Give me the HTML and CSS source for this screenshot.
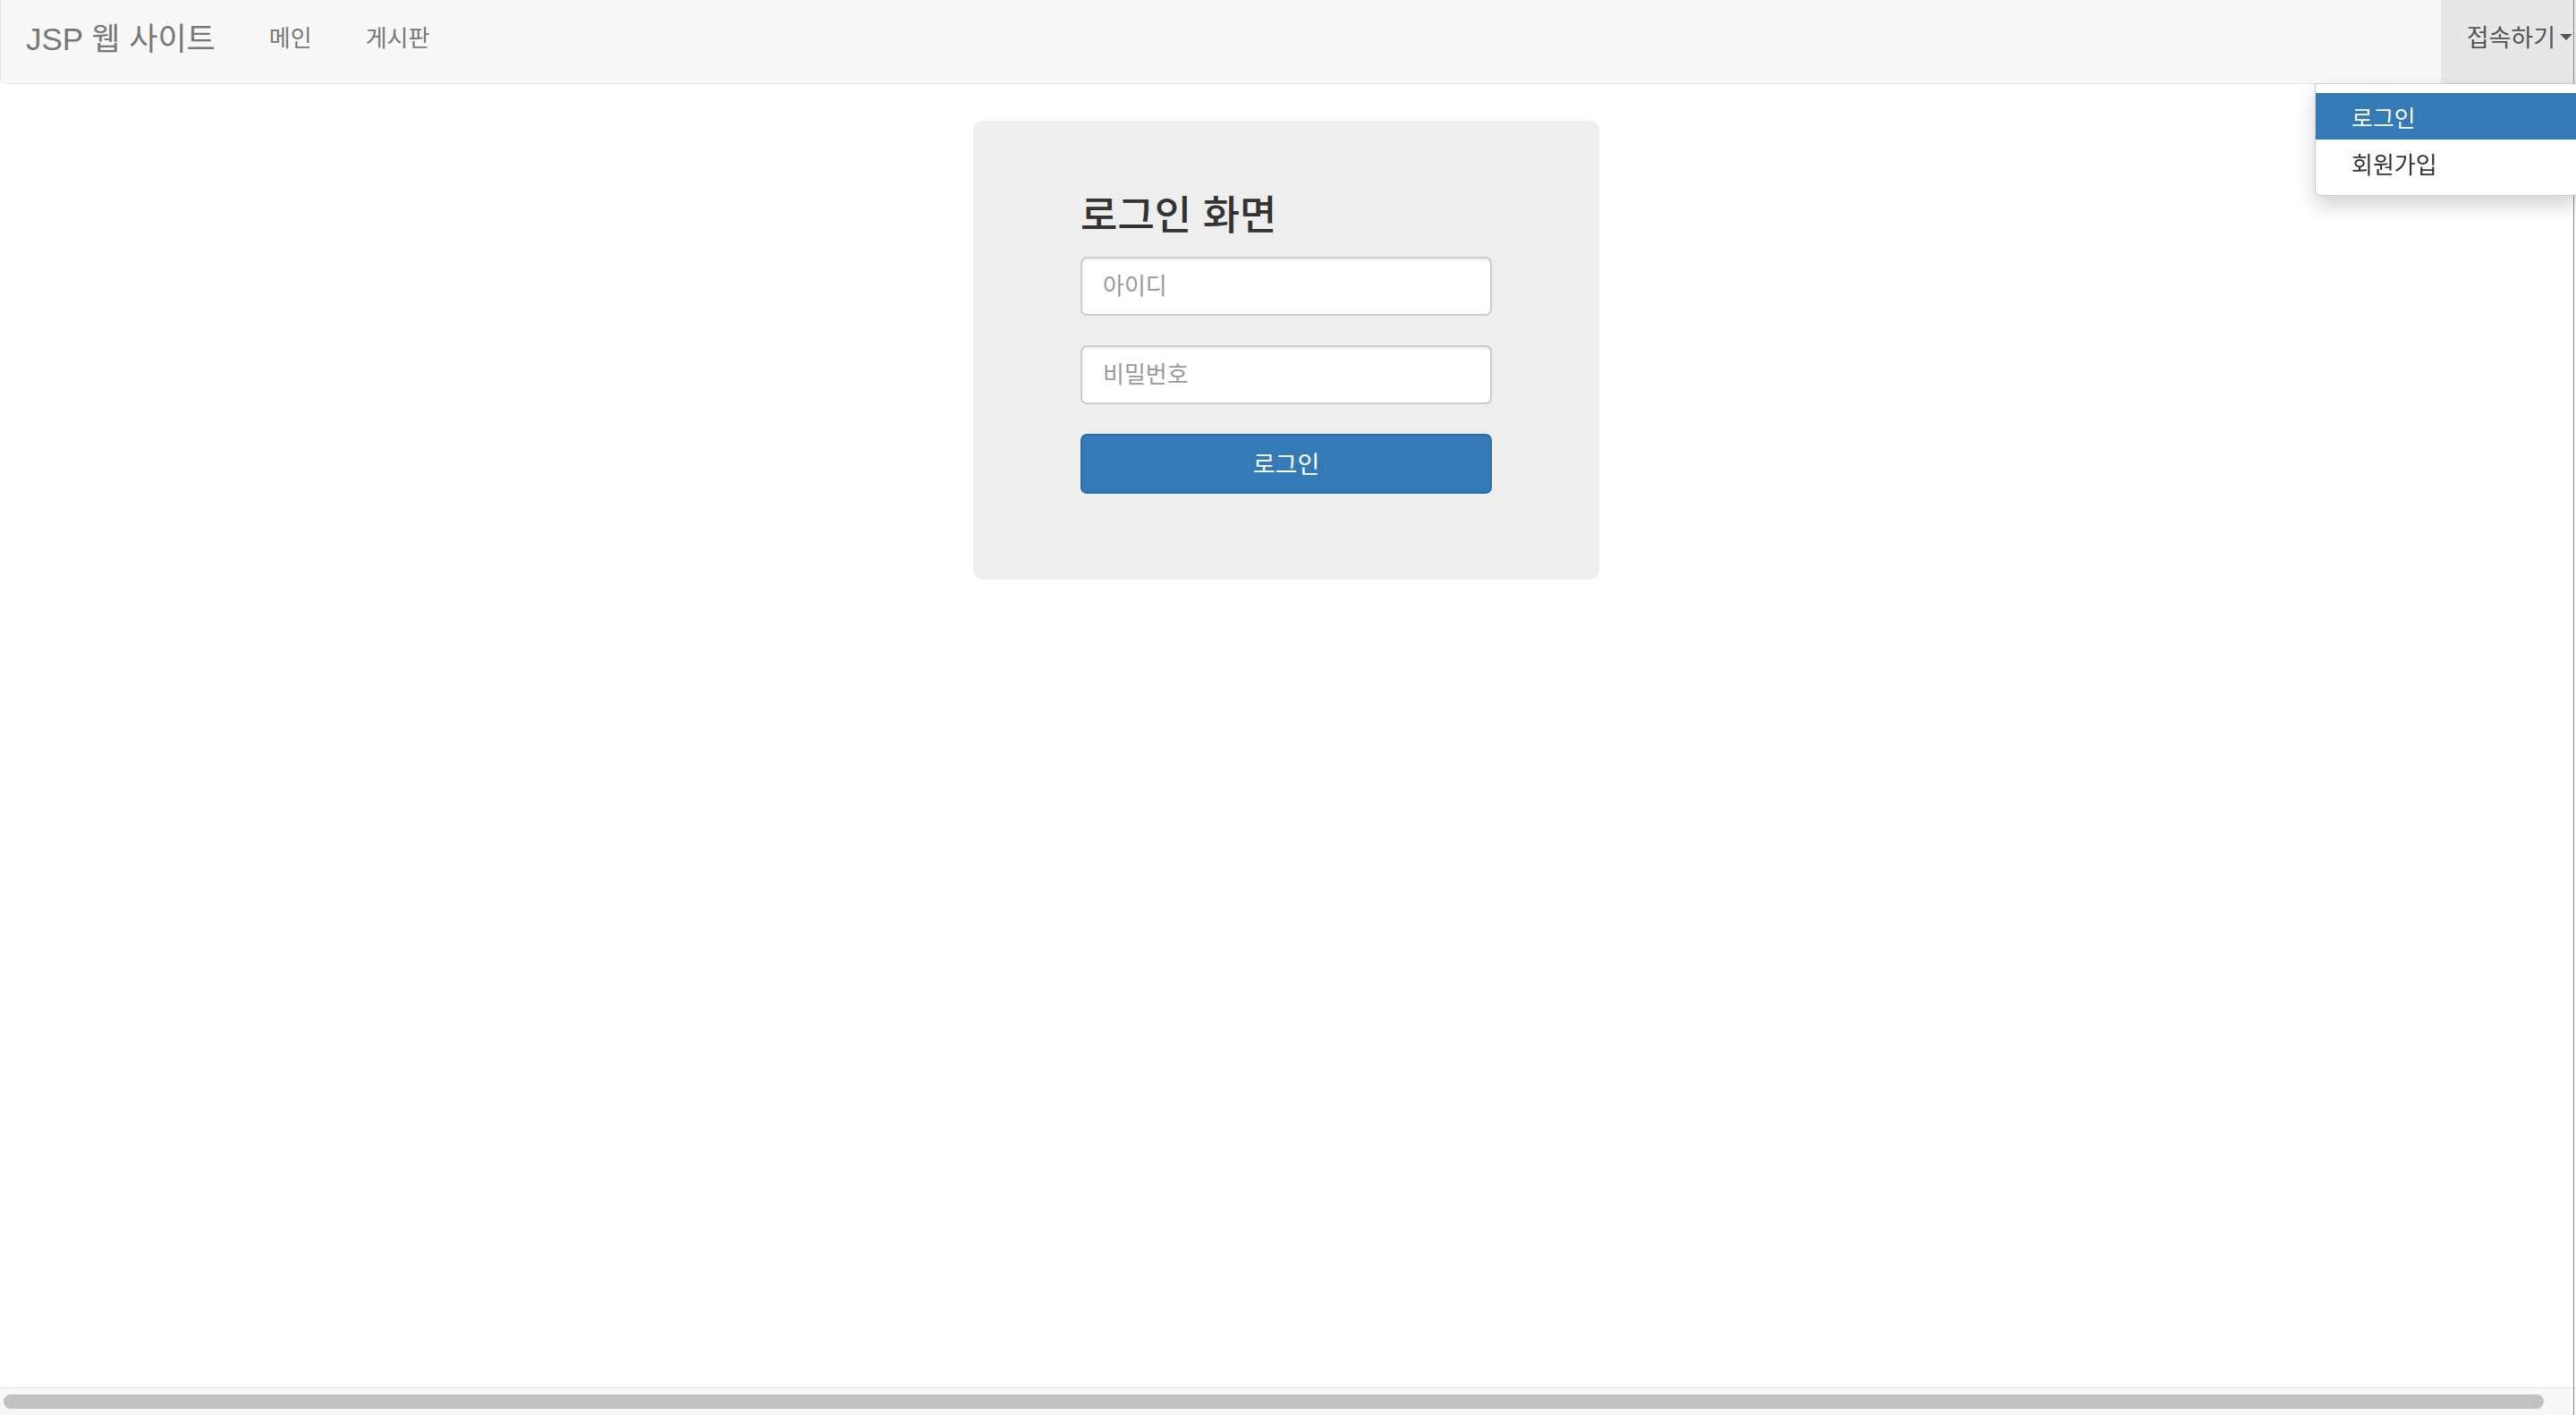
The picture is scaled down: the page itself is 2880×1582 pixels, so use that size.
FILE: index.html
```html
<!DOCTYPE html>
<html lang="ko">
<head>
  <meta charset="utf-8">
  <title>JSP 게시판 웹 사이트</title>
  <link rel="stylesheet" href="styles.css">
</head>
<body>
  <nav class="navbar">
    <div class="navbar-left">
      <a class="navbar-brand" href="#">JSP 웹 사이트</a>
      <ul class="nav">
        <li><a href="#">메인</a></li>
        <li><a href="#">게시판</a></li>
      </ul>
    </div>
    <ul class="nav navbar-right">
      <li class="dropdown open">
        <a class="dropdown-toggle" href="#">접속하기<span class="caret"></span></a>
        <ul class="dropdown-menu">
          <li class="active"><a href="#">로그인</a></li>
          <li><a href="#">회원가입</a></li>
        </ul>
      </li>
    </ul>
  </nav>

  <div class="container">
    <div class="jumbotron">
      <form method="post" action="#">
        <h3>로그인 화면</h3>
        <div class="form-group">
          <input type="text" class="form-control" placeholder="아이디" name="userID" maxlength="20">
        </div>
        <div class="form-group">
          <input type="password" class="form-control" placeholder="비밀번호" name="userPassword" maxlength="20">
        </div>
        <button type="button" class="btn-primary">로그인</button>
      </form>
    </div>
  </div>

  <div class="hscroll">
    <div class="hscroll-thumb"></div>
  </div>
  <div class="window-edge"></div>
</body>
</html>
```

FILE: styles.css
```css
html,
body {
  margin: 0;
  height: 100%;
  overflow: hidden;
}

body {
  background-color: #fff;
  color: #333;
  font-family: "Liberation Sans", "Noto Sans CJK KR", sans-serif;
  font-size: 26px;
}

a {
  text-decoration: none;
}

ul {
  list-style: none;
  margin: 0;
  padding: 0;
}

/* top navigation */

.navbar {
  display: flex;
  justify-content: space-between;
  height: 94px;
  box-sizing: border-box;
  background-color: #f8f8f8;
  border-bottom: 1px solid #e7e7e7;
  border-left: 1px solid #e7e7e7;
  border-radius: 0 0 7px 7px;
}

.navbar-left {
  display: flex;
}

.nav {
  display: flex;
}

.navbar-brand,
.nav a {
  display: flex;
  align-items: center;
  height: 93px;
  box-sizing: border-box;
  padding: 0 29px 12px;
  color: #777;
}

.navbar-brand {
  font-size: 35px;
  padding-left: 28px;
  padding-right: 30px;
}

.nav a {
  padding: 0 30px 12px 30px;
}

.navbar-right .dropdown {
  position: relative;
}

.dropdown-toggle {
  background-color: #e7e7e7;
}

.nav .dropdown-toggle {
  color: #555;
  font-size: 27px;
  padding: 0 4px 12px 29px;
}

.caret {
  display: inline-block;
  width: 0;
  height: 0;
  margin-left: 5px;
  margin-top: 2px;
  border-top: 7px solid #555;
  border-left: 7px solid transparent;
  border-right: 7px solid transparent;
}

.dropdown-menu {
  position: absolute;
  top: 93px;
  right: -3px;
  width: 293px;
  padding: 10px 0;
  background-color: #fff;
  border: 1px solid rgba(0, 0, 0, 0.2);
  border-radius: 0 0 7px 7px;
  box-shadow: 0 11px 22px rgba(0, 0, 0, 0.175);
  z-index: 10;
}

.nav .dropdown-menu a {
  height: 52px;
  padding: 0 0 0 40px;
  color: #333;
}

.nav .dropdown-menu .active a {
  background-color: #337ab7;
  color: #fff;
}

/* login box */

.container {
  display: flex;
  justify-content: center;
  padding: 41px 4px 0 0;
}

.jumbotron {
  width: 700px;
  box-sizing: border-box;
  padding: 81px 120px 96px;
  background-color: #eee;
  border-radius: 11px;
}

.jumbotron h3 {
  margin: 0 0 19px;
  font-size: 45px;
  line-height: 52px;
  font-weight: 500;
  color: #333;
}

.form-group {
  margin-bottom: 33px;
}

.form-control {
  display: block;
  width: 100%;
  height: 66px;
  box-sizing: border-box;
  padding: 0 23px;
  font-family: inherit;
  font-size: 26px;
  color: #555;
  background-color: #fff;
  border: 2px solid #ccc;
  border-radius: 7px;
  box-shadow: inset 0 2px 2px rgba(0, 0, 0, 0.075);
}

.form-control::placeholder {
  color: #999;
}

.btn-primary {
  display: block;
  width: 100%;
  height: 67px;
  padding-bottom: 3px;
  font-family: inherit;
  font-size: 27px;
  color: #fff;
  background-color: #337ab7;
  border: 2px solid #2e6da4;
  border-radius: 7px;
  cursor: pointer;
}

/* fake browser scrollbar at the bottom */

.hscroll {
  position: fixed;
  left: 0;
  right: 0;
  bottom: 0;
  height: 30px;
  background-color: #f8f8f8;
  border-top: 1px solid #e5e5e5;
}

.hscroll-thumb {
  margin: 7px 36px 0 4px;
  height: 16px;
  background-color: #c1c1c1;
  border-radius: 8px;
}

.window-edge {
  position: fixed;
  top: 0;
  bottom: 0;
  right: 2px;
  width: 1px;
  background-color: #8a8a8a;
}
```
